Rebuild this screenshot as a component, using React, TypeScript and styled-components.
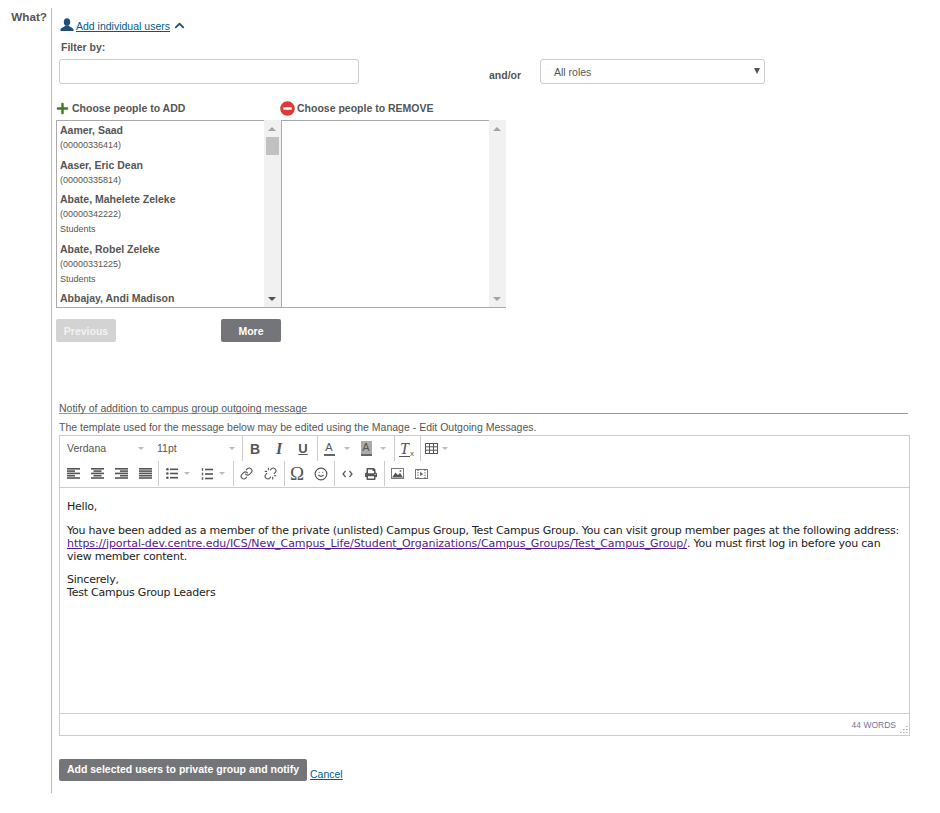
import React from 'react';
import styled, { createGlobalStyle } from 'styled-components';
import { FaChevronUp, FaPlus, FaMinusCircle, FaPrint } from 'react-icons/fa';
import { Link as LinkIcon, Unlink, Smile } from 'lucide-react';

const GlobalStyle = createGlobalStyle`
  html, body {
    margin: 0;
    padding: 0;
    background: #fff;
    font-family: "Liberation Sans", Arial, sans-serif;
    color: #555;
  }
`;

const Page = styled.div`
  display: flex;
  align-items: flex-start;
  padding-top: 8px;
  height: 805px;
`;

const Question = styled.div`
  width: 47px;
  padding-top: 1px;
  text-align: right;
  font-size: 11.7px;
  line-height: 15px;
  font-weight: bold;
  color: #555;
`;

const Main = styled.div`
  margin-left: 4px;
  width: 870px;
  height: 785px;
  border-left: 1px solid #bbb;
  box-sizing: border-box;
`;

const ToggleRow = styled.div`
  display: flex;
  align-items: center;
  height: 16px;
  margin: 9px 0 0 8px;
  color: #1f4e79;
`;

const ToggleLink = styled.a`
  font-size: 10.5px;
  color: #005a8c;
  text-decoration: underline;
  margin: 1px 4px 0 2px;
`;

const FieldLabel = styled.div`
  font-size: 10.5px;
  font-weight: bold;
  line-height: 14px;
  color: #555;
  margin: 7px 0 0 9px;
`;

const FilterRow = styled.div`
  display: flex;
  margin: 5px 0 0 7px;
`;

const FilterInput = styled.input`
  width: 300px;
  height: 25px;
  box-sizing: border-box;
  border: 1px solid #ccc;
  border-radius: 3px;
  background: #fff;
`;

const AndOr = styled.span`
  font-size: 10.5px;
  font-weight: bold;
  color: #555;
  margin: 10px 0 0 130px;
  width: 51px;
  line-height: 13px;
`;

const RoleSelect = styled.div`
  width: 225px;
  height: 25px;
  box-sizing: border-box;
  border: 1px solid #ccc;
  border-radius: 3px;
  padding: 0 4px 0 13px;
  display: flex;
  align-items: center;
  justify-content: space-between;
  font-size: 10.5px;
  color: #555;
`;

const SelectArrow = styled.span`
  width: 0;
  height: 0;
  margin-bottom: 2px;
  border-left: 3.5px solid transparent;
  border-right: 3.5px solid transparent;
  border-top: 6px solid #555;
`;

const PickerGrid = styled.div`
  display: grid;
  grid-template-columns: 225px 225px;
  margin: 12px 0 0 4px;
`;

const PickerHeading = styled.div<{ $indent: number; $gap: number }>`
  display: flex;
  align-items: center;
  gap: ${p => p.$gap}px;
  height: 24px;
  margin-left: ${p => p.$indent}px;
  font-size: 10.5px;
  font-weight: bold;
  color: #555;
`;

const PickerBox = styled.div`
  height: 188px;
  box-sizing: border-box;
  display: flex;
  border-bottom: 1px solid #aaa;
  overflow: hidden;
`;

const PersonList = styled.div`
  flex: 1;
  padding: 2px 0 0 3px;
  overflow: hidden;
  border-top: 1px solid #aaa;
  border-left: 1px solid #aaa;
`;

const Person = styled.div`
  margin-bottom: 4.6px;
`;

const PersonName = styled.div`
  font-size: 10.5px;
  font-weight: bold;
  line-height: 15px;
  color: #555;
  white-space: nowrap;
`;

const PersonMeta = styled.div`
  font-size: 9px;
  line-height: 15px;
  color: #555;
`;

const Scrollbar = styled.div`
  width: 17px;
  flex: none;
  background: #f1f1f1;
  position: relative;
`;

const ScrollThumb = styled.div`
  position: absolute;
  top: 17px;
  left: 2px;
  width: 13px;
  height: 18px;
  background: #c1c1c1;
`;

const ScrollArrow = styled.span<{ $dir: 'up' | 'down'; $active?: boolean }>`
  position: absolute;
  left: 4px;
  ${p => (p.$dir === 'up' ? 'top: 7px;' : 'bottom: 6px;')}
  width: 0;
  height: 0;
  border-left: 4px solid transparent;
  border-right: 4px solid transparent;
  ${p => (p.$dir === 'up' ? 'border-bottom' : 'border-top')}: 4px solid ${p => (p.$active ? '#505050' : '#a3a3a3')};
`;

const PagerRow = styled.div`
  display: flex;
  justify-content: space-between;
  width: 225px;
  margin: 11px 0 0 4px;
`;

const PagerButton = styled.button<{ $disabled?: boolean }>`
  width: 60px;
  height: 23px;
  padding: 0;
  border: 0;
  border-radius: 2px;
  background: ${p => (p.$disabled ? '#d3d3d3' : '#747578')};
  color: ${p => (p.$disabled ? '#f2f2f2' : '#fff')};
  font-family: inherit;
  font-size: 10.5px;
  font-weight: bold;
`;

const MessageSection = styled.div`
  margin: 59px 0 0 7px;
  width: 851px;
`;

const MessageHeading = styled.div`
  width: 849px;
  height: 12px;
  font-size: 10.5px;
  line-height: 14px;
  border-bottom: 1px solid #999;
  color: #555;
`;

const MessageHint = styled.div`
  font-size: 10.5px;
  line-height: 12px;
  margin-top: 7px;
  color: #555;
`;

const Editor = styled.div`
  margin-top: 2px;
  height: 301px;
  box-sizing: border-box;
  border: 1px solid #ccc;
  display: flex;
  flex-direction: column;
`;

const Toolbar = styled.div`
  height: 52px;
  flex: none;
  box-sizing: border-box;
  border-bottom: 1px solid #ccc;
  padding-left: 1px;
`;

const ToolRow = styled.div`
  display: flex;
  height: 25px;
  align-items: center;
`;

const ToolGroup = styled.div<{ $divider?: boolean; $width?: number }>`
  display: flex;
  align-items: center;
  height: 25px;
  ${p => (p.$width ? `width: ${p.$width}px;` : '')}
  ${p => (p.$divider ? 'border-right: 1px solid #ccc;' : '')}
  box-sizing: border-box;
`;

const FontPick = styled.div<{ $width: number }>`
  width: ${p => p.$width}px;
  padding: 0 7px 1px 6px;
  box-sizing: border-box;
  display: flex;
  justify-content: space-between;
  align-items: center;
  font-size: 10.5px;
  color: #555;
`;

const Caret = styled.span`
  width: 0;
  height: 0;
  border-left: 3px solid transparent;
  border-right: 3px solid transparent;
  border-top: 3px solid #bbb;
`;

const ToolBtn = styled.span<{ $width?: number; $gap?: number }>`
  width: ${p => p.$width ?? 24}px;
  height: 24px;
  flex: none;
  display: inline-flex;
  align-items: center;
  justify-content: center;
  gap: ${p => p.$gap ?? 5}px;
  color: #555;
`;

const Glyph = styled.span<{ $italic?: boolean; $under?: boolean; $serif?: boolean; $size?: number; $light?: boolean }>`
  font-family: ${p => (p.$serif ? '"Liberation Serif", serif' : '"Liberation Sans", sans-serif')};
  font-size: ${p => p.$size ?? 13}px;
  font-weight: ${p => (p.$light ? 'normal' : 'bold')};
  font-style: ${p => (p.$italic ? 'italic' : 'normal')};
  text-decoration: ${p => (p.$under ? 'underline' : 'none')};
  color: #555;
  line-height: 14px;
`;

const ColorGlyph = styled.span<{ $filled?: boolean }>`
  display: inline-block;
  width: 11px;
  height: 15px;
  text-align: center;
  font-size: 11px;
  line-height: 13px;
  color: #555;
  border-bottom: 2px solid #666;
  box-sizing: border-box;
  background: ${p => (p.$filled ? '#aaa' : 'transparent')};
`;

const ClearGlyph = styled.span`
  position: relative;
  margin-right: 5px;
  font-family: "Liberation Serif", serif;
  font-style: italic;
  font-size: 16px;
  line-height: 15px;
  color: #555;
  border-bottom: 1px solid #555;
  padding: 0 1px;
  sub {
    position: absolute;
    font-size: 8px;
    font-family: "Liberation Sans", sans-serif;
    right: -4px;
    bottom: -2px;
    line-height: 8px;
    font-style: normal;
  }
`;

const EditorBody = styled.div`
  flex: 1;
  padding: 12px 6px 0 7px;
  font-family: "DejaVu Sans", Verdana, sans-serif;
  font-size: 11px;
  letter-spacing: -0.22px;
  line-height: 13px;
  color: #222;
  p {
    margin: 0 0 10.5px;
  }
  a {
    color: #551a8b;
    letter-spacing: -0.06px;
    text-decoration: underline;
  }
`;

const StatusBar = styled.div`
  height: 22px;
  flex: none;
  box-sizing: border-box;
  border-top: 1px solid #ccc;
  display: flex;
  align-items: center;
  justify-content: flex-end;
  padding: 0 1px 0 0;
  gap: 3px;
`;

const WordCount = styled.span`
  font-size: 8.5px;
  color: #75759a;
`;

const GripWrap = styled.span`
  align-self: flex-end;
  display: flex;
  margin-bottom: 1px;
`;

const Actions = styled.div`
  display: flex;
  align-items: flex-end;
  gap: 3px;
  margin-top: 23px;
`;

const SubmitButton = styled.button`
  width: 248px;
  height: 22px;
  padding: 0 0 2px;
  border: 0;
  border-radius: 2px;
  background: #747578;
  color: #fff;
  font-family: inherit;
  font-size: 10.5px;
  font-weight: bold;
`;

const CancelLink = styled.a`
  font-size: 10.5px;
  line-height: 12px;
  margin-bottom: 1px;
  color: #005a8c;
  text-decoration: underline;
`;

const UserIcon = () => (
  <svg width="14" height="14" viewBox="0 0 14 14">
    <ellipse cx="7" cy="4" rx="3.2" ry="3.8" fill="#1f4e79" />
    <path d="M5 7.5C5 9 1 9.5 0.5 11.5V13H13.5V11.5C13 9.5 9 9 9 7.5Z" fill="#1f4e79" />
  </svg>
);

type AlignKind = 'left' | 'center' | 'right' | 'justify';

// alignment icons, five bars with varying inset
const AlignIcon = ({ kind }: { kind: AlignKind }) => {
  const rows = [0, 1, 2, 3, 4];
  return (
    <svg width="13" height="11" viewBox="0 0 13 11">
      {rows.map(i => {
        const w = kind === 'justify' || i % 2 === 0 ? 13 : 8;
        const x = kind === 'left' || kind === 'justify' ? 0 : kind === 'right' ? 13 - w : (13 - w) / 2;
        return <rect key={i} x={x} y={i * 2.3} width={w} height="1.6" fill="#555" />;
      })}
    </svg>
  );
};

const BulletIcon = () => (
  <svg width="12" height="11" viewBox="0 0 12 11">
    {[1.3, 5.5, 9.7].map(y => (
      <g key={y}>
        <circle cx="1.4" cy={y} r="1.3" fill="#555" />
        <rect x="4" y={y - 0.8} width="8" height="1.6" fill="#555" />
      </g>
    ))}
  </svg>
);

const NumberIcon = () => (
  <svg width="12" height="12" viewBox="0 0 12 12">
    {[1.5, 6, 10.5].map(y => (
      <g key={y}>
        <rect x="0.8" y={y - 1.4} width="1.4" height="2.8" fill="#666" />
        <rect x="4" y={y - 0.8} width="8" height="1.6" fill="#555" />
      </g>
    ))}
  </svg>
);

const TableIcon = () => (
  <svg width="13" height="11" viewBox="0 0 13 11" fill="none" stroke="#555" strokeWidth="1">
    <rect x="0.5" y="0.5" width="12" height="10" />
    <path d="M0.5 3.8H12.5M0.5 7.2H12.5M4.5 0.5V10.5M8.5 0.5V10.5" />
  </svg>
);

const CodeIcon = () => (
  <svg width="11" height="8" viewBox="0 0 11 8" fill="none" stroke="#555" strokeWidth="1.2">
    <path d="M3.5 1L1 4L3.5 7M7.5 1L10 4L7.5 7" />
  </svg>
);

const PictureIcon = () => (
  <svg width="13" height="11" viewBox="0 0 13 11">
    <rect x="0.5" y="0.5" width="12" height="10" fill="none" stroke="#777" />
    <path d="M1 9.5L4.5 4.5L7 7L9 5L12 9.5Z" fill="#555" />
    <circle cx="9.5" cy="3" r="1" fill="#777" />
  </svg>
);

const MediaIcon = () => (
  <svg width="13" height="10" viewBox="0 0 13 10">
    <rect x="0.5" y="0.5" width="12" height="9" fill="none" stroke="#777" />
    <path d="M3 0.5V2M3 3.2V4.4M3 5.6V6.8M3 8V9.5M10 0.5V2M10 3.2V4.4M10 5.6V6.8M10 8V9.5" stroke="#555" />
    <path d="M5.2 3L8 5L5.2 7Z" fill="#555" />
  </svg>
);

const ResizeGrip = () => (
  <svg width="9" height="9" viewBox="0 0 9 9">
    {[[7, 1], [4, 4], [7, 4], [1, 7], [4, 7], [7, 7]].map(([x, y]) => (
      <rect key={`${x}-${y}`} x={x} y={y} width="1.5" height="1" fill="#aaa" />
    ))}
  </svg>
);

const people = [
  { name: 'Aamer, Saad', id: '(00000336414)' },
  { name: 'Aaser, Eric Dean', id: '(00000335814)' },
  { name: 'Abate, Mahelete Zeleke', id: '(00000342222)', role: 'Students' },
  { name: 'Abate, Robel Zeleke', id: '(00000331225)', role: 'Students' },
  { name: 'Abbajay, Andi Madison' },
];

export default function App() {
  return (
    <>
      <GlobalStyle />
      <Page>
        <Question>What?</Question>
        <Main>
          <ToggleRow>
            <UserIcon />
            <ToggleLink>Add individual users</ToggleLink>
            <FaChevronUp size={11} color="#1f4e79" />
          </ToggleRow>
          <FieldLabel>Filter by:</FieldLabel>
          <FilterRow>
            <FilterInput />
            <AndOr>and/or</AndOr>
            <RoleSelect>
              All roles
              <SelectArrow />
            </RoleSelect>
          </FilterRow>
          <PickerGrid>
            <PickerHeading $indent={0} $gap={3}>
              <FaPlus size={13} color="#3f7d20" />
              Choose people to ADD
            </PickerHeading>
            <PickerHeading $indent={-1} $gap={2}>
              <FaMinusCircle size={15} color="#dc3a36" />
              Choose people to REMOVE
            </PickerHeading>
            <PickerBox>
              <PersonList>
                {people.map(p => (
                  <Person key={p.name}>
                    <PersonName>{p.name}</PersonName>
                    {p.id && <PersonMeta>{p.id}</PersonMeta>}
                    {p.role && <PersonMeta>{p.role}</PersonMeta>}
                  </Person>
                ))}
              </PersonList>
              <Scrollbar>
                <ScrollArrow $dir="up" />
                <ScrollThumb />
                <ScrollArrow $dir="down" $active />
              </Scrollbar>
            </PickerBox>
            <PickerBox>
              <PersonList />
              <Scrollbar>
                <ScrollArrow $dir="up" />
                <ScrollArrow $dir="down" />
              </Scrollbar>
            </PickerBox>
          </PickerGrid>
          <PagerRow>
            <PagerButton $disabled>Previous</PagerButton>
            <PagerButton>More</PagerButton>
          </PagerRow>
          <MessageSection>
            <MessageHeading>Notify of addition to campus group outgoing message</MessageHeading>
            <MessageHint>The template used for the message below may be edited using the Manage - Edit Outgoing Messages.</MessageHint>
            <Editor>
              <Toolbar>
                <ToolRow>
                  <ToolGroup $divider>
                    <FontPick $width={90}>Verdana<Caret /></FontPick>
                    <FontPick $width={91}>11pt<Caret /></FontPick>
                  </ToolGroup>
                  <ToolGroup $divider $width={75}>
                    <ToolBtn><Glyph $size={14}>B</Glyph></ToolBtn>
                    <ToolBtn><Glyph $italic $serif $size={16}>I</Glyph></ToolBtn>
                    <ToolBtn><Glyph $under>U</Glyph></ToolBtn>
                  </ToolGroup>
                  <ToolGroup $divider $width={77}>
                    <ToolBtn $width={37} $gap={9}><ColorGlyph>A</ColorGlyph><Caret /></ToolBtn>
                    <ToolBtn $width={36} $gap={8}><ColorGlyph $filled>A</ColorGlyph><Caret /></ToolBtn>
                  </ToolGroup>
                  <ToolGroup $divider $width={26}>
                    <ToolBtn><ClearGlyph>T<sub>x</sub></ClearGlyph></ToolBtn>
                  </ToolGroup>
                  <ToolBtn $width={30} $gap={4}><TableIcon /><Caret /></ToolBtn>
                </ToolRow>
                <ToolRow>
                  <ToolGroup $divider $width={98}>
                    <ToolBtn><AlignIcon kind="left" /></ToolBtn>
                    <ToolBtn><AlignIcon kind="center" /></ToolBtn>
                    <ToolBtn><AlignIcon kind="right" /></ToolBtn>
                    <ToolBtn><AlignIcon kind="justify" /></ToolBtn>
                  </ToolGroup>
                  <ToolGroup $divider $width={75}>
                    <ToolBtn $width={37} $gap={6}><BulletIcon /><Caret /></ToolBtn>
                    <ToolBtn $width={34} $gap={6}><NumberIcon /><Caret /></ToolBtn>
                  </ToolGroup>
                  <ToolGroup $divider $width={51}>
                    <ToolBtn><LinkIcon size={13} /></ToolBtn>
                    <ToolBtn><Unlink size={13} /></ToolBtn>
                  </ToolGroup>
                  <ToolGroup $divider $width={50}>
                    <ToolBtn><Glyph $serif $light $size={19}>Ω</Glyph></ToolBtn>
                    <ToolBtn><Smile size={14} /></ToolBtn>
                  </ToolGroup>
                  <ToolGroup $divider $width={50}>
                    <ToolBtn><CodeIcon /></ToolBtn>
                    <ToolBtn><FaPrint size={12} /></ToolBtn>
                  </ToolGroup>
                  <ToolBtn><PictureIcon /></ToolBtn>
                  <ToolBtn><MediaIcon /></ToolBtn>
                </ToolRow>
              </Toolbar>
              <EditorBody>
                <p>Hello,</p>
                <p>
                  You have been added as a member of the private (unlisted) Campus Group, Test Campus Group. You can visit group member pages at the following address:{' '}
                  <a>https://jportal-dev.centre.edu/ICS/New_Campus_Life/Student_Organizations/Campus_Groups/Test_Campus_Group/</a>. You must first log in before you can view member content.
                </p>
                <p>
                  Sincerely,
                  <br />
                  Test Campus Group Leaders
                </p>
              </EditorBody>
              <StatusBar>
                <WordCount>44 WORDS</WordCount>
                <GripWrap><ResizeGrip /></GripWrap>
              </StatusBar>
            </Editor>
            <Actions>
              <SubmitButton>Add selected users to private group and notify</SubmitButton>
              <CancelLink>Cancel</CancelLink>
            </Actions>
          </MessageSection>
        </Main>
      </Page>
    </>
  );
}
